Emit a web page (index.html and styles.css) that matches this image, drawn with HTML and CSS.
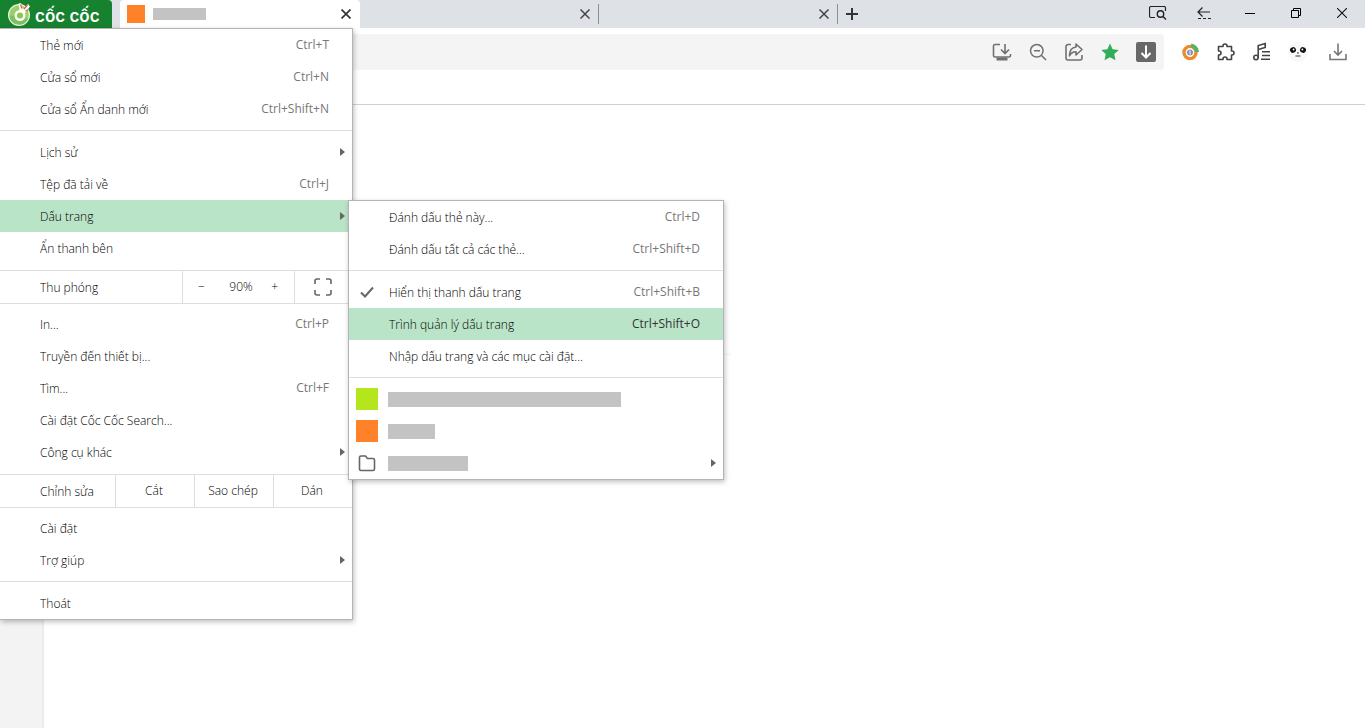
FILE: index.html
```html
<!DOCTYPE html>
<html lang="vi">
<head>
<meta charset="utf-8">
<title>Cốc Cốc</title>
<link rel="stylesheet" href="styles.css">
</head>
<body>
<div class="browser">
  <header class="tabstrip">
    <button class="brand" aria-label="Menu Cốc Cốc">
      <svg width="23" height="26" viewBox="0 0 23 26" aria-hidden="true">
        <circle cx="11" cy="14" r="11" fill="#e9f5df"/>
        <circle cx="11" cy="14" r="9.800" fill="#9bcf68"/>
        <path d="M1.500 15a9.800 9.800 0 0 0 18.500 3l-8-4z" fill="#7dc05f"/>
        <path d="M12 12L10.500 2.500l2.500-.5 2 6 5-5 2 2.500-6 8z" fill="#f4faef"/>
        <path d="M12.500 3.500l1.500 4M19.500 4l-3.500 4M20.500 8.500l-3 1.500" stroke="#e25a4c" stroke-width="1.200"/>
        <circle cx="12" cy="14.500" r="4.300" fill="#8cc651" stroke="#fff" stroke-width="2.400"/>
      </svg>
      <span class="brand-name">cốc cốc</span>
    </button>
    <div class="tab tab-active">
      <span class="favicon orange"></span><span class="mask mask-tab"></span>
      <button class="tab-close" aria-label="Đóng thẻ"><svg width="10" height="10" viewBox="0 0 10 10"><path d="M.5.5l9 9M9.5.5l-9 9" stroke="#333" stroke-width="1.7"/></svg></button>
    </div>
    <div class="tab">
      <button class="tab-close" aria-label="Đóng thẻ"><svg width="10" height="10" viewBox="0 0 10 10"><path d="M.5.5l9 9M9.5.5l-9 9" stroke="#444" stroke-width="1.5"/></svg></button>
    </div>
    <div class="tab">
      <button class="tab-close" aria-label="Đóng thẻ"><svg width="10" height="10" viewBox="0 0 10 10"><path d="M.5.5l9 9M9.5.5l-9 9" stroke="#444" stroke-width="1.5"/></svg></button>
    </div>
    <button class="new-tab" aria-label="Thẻ mới"><svg width="12" height="12" viewBox="0 0 12 12"><path d="M6 0v12M0 6h12" stroke="#333" stroke-width="2"/></svg></button>
    <div class="window-controls">
      <button aria-label="Tìm thẻ"><svg width="18" height="14" viewBox="0 0 18 14" fill="none" stroke="#222"><path d="M6 11.500H2A1.500 1.500 0 0 1 .5 10V2A1.500 1.500 0 0 1 2 .5h13A1.500 1.500 0 0 1 16.500 2v3" stroke-width="1.200"/><circle cx="11.500" cy="8" r="3.200" stroke-width="1.400"/><path d="M14 10.500l3 3" stroke-width="1.400"/></svg></button>
      <button aria-label="Khôi phục thẻ"><svg width="14" height="14" viewBox="0 0 14 14" fill="none" stroke="#222" stroke-width="1.200"><path d="M13 6H1M5.500 1.500L1 6l4.500 4.500"/><path d="M1 12.500h13" stroke-dasharray="3 2"/></svg></button>
      <button aria-label="Thu nhỏ"><svg width="10" height="10" viewBox="0 0 10 10"><path d="M0 5.500h10" stroke="#000"/></svg></button>
      <button aria-label="Khôi phục cửa sổ"><svg width="10" height="10" viewBox="0 0 10 10" fill="none" stroke="#000"><path d="M.5 2.500h7v7h-7zM2.500 2.500v-2h7v7h-2"/></svg></button>
      <button aria-label="Đóng"><svg width="10" height="10" viewBox="0 0 10 10"><path d="M0 0l10 10M10 0L0 10" stroke="#111" stroke-width="1.100"/></svg></button>
    </div>
  </header>

  <div class="toolbar">
    <div class="omnibox">
      <button aria-label="Cài đặt ứng dụng"><svg width="20" height="20" viewBox="0 0 20 20" fill="none" stroke="#707070" stroke-width="1.600"><path d="M8 2.500H3A1.500 1.500 0 0 0 1.500 4v9.500A1.500 1.500 0 0 0 3 15h14a1.500 1.500 0 0 0 1.500-1.500V12"/><path d="M4.500 17h11" stroke-width="3"/><path d="M13 2v9M9 7.500l4 4 4-4"/></svg></button>
      <button aria-label="Thu phóng"><svg width="20" height="20" viewBox="0 0 20 20" fill="none" stroke="#707070" stroke-width="1.500"><circle cx="8.800" cy="8.800" r="6.300"/><path d="M6 8.800h6M13.500 13.500l4.500 4.500"/></svg></button>
      <button aria-label="Chia sẻ"><svg width="20" height="20" viewBox="0 0 20 20" fill="none" stroke="#707070" stroke-width="1.600" stroke-linejoin="round"><path d="M7 2.500H4A2 2 0 0 0 2 4.500v11.500a2 2 0 0 0 2 2h12a2 2 0 0 0 2-2V13"/><path d="M12 2l6 5.500-6 5.500V9.800c-3 0-5 1-6.500 4C5.500 8.500 8 5.500 12 5z"/></svg></button>
      <button aria-label="Dấu trang"><svg width="20" height="20" viewBox="0 0 20 20"><path d="M10 1.500l2.600 5.700 6.200.7-4.600 4.200 1.300 6.200-5.500-3.100-5.500 3.100 1.300-6.200L1.200 7.900l6.200-.7z" fill="#2fae57"/></svg></button>
      <button aria-label="Tải xuống"><svg width="20" height="20" viewBox="0 0 20 20"><rect width="20" height="20" rx="2" fill="#686868"/><path d="M10 3.500v12M5.500 11l4.500 4.500 4.500-4.500" fill="none" stroke="#fff" stroke-width="2"/></svg></button>
    </div>
    <div class="extensions">
      <button aria-label="Tiện ích bảo vệ"><svg width="20" height="20" viewBox="0 0 20 20" fill="none"><circle cx="10" cy="10.500" r="6" stroke="#ed8c2e" stroke-width="3.500"/><path d="M11 3.500a7 7 0 0 1 6 6.500" stroke="#55b467" stroke-width="4"/><circle cx="10" cy="10.500" r="3.600" fill="#8290b4" stroke="#fff" stroke-width="1.200"/><path d="M10 8.500v4" stroke="#fff"/></svg></button>
      <button aria-label="Tiện ích"><svg width="20" height="20" viewBox="0 0 20 20" fill="none" stroke="#444" stroke-width="1.600" stroke-linejoin="round"><path d="M2.500 4.500H7V4a2 2 0 0 1 4 0v.5h4.500V9h.5a2 2 0 0 1 0 4h-.5v4.500H11V17a2 2 0 0 0-4 0v.5H2.500V13H3a2 2 0 0 0 0-4h-.5z"/></svg></button>
      <button aria-label="Danh sách nhạc"><svg width="20" height="20" viewBox="0 0 20 20" fill="none" stroke="#444" stroke-width="1.600"><circle cx="4" cy="15.500" r="2.200"/><path d="M6.200 15.500V3.500l7-2v4l-7 2M10 9.800h8M10 13.500h8M9 17.200h9"/></svg></button>
      <button aria-label="Hồ sơ"><svg width="20" height="20" viewBox="0 0 20 20"><circle cx="10" cy="10" r="10" fill="#f8f8f8"/><ellipse cx="5" cy="8" rx="3" ry="2.800" fill="#111" transform="rotate(-25 5 8)"/><ellipse cx="15" cy="8" rx="3" ry="2.800" fill="#111" transform="rotate(25 15 8)"/><circle cx="5.600" cy="7.500" r=".9" fill="#fff"/><circle cx="14.400" cy="7.500" r=".9" fill="#fff"/><path d="M9 11h2M7.500 14h5" stroke="#333"/></svg></button>
      <button aria-label="Tệp tải về"><svg width="20" height="20" viewBox="0 0 20 20" fill="none" stroke="#777" stroke-width="1.600"><path d="M2 12v5.500h16V12M10 1.500v11M6 9l4 4 4-4"/></svg></button>
    </div>
  </div>
  <div class="bookmarks-bar"></div>

  <div class="viewport">
    <aside class="sidebar"></aside>
    <main class="page"><hr class="page-rule"></main>
  </div>

  <nav class="menu main-menu" aria-label="Menu chính">
    <ul class="group">
      <li><button class="item"><span class="label">Thẻ mới</span><kbd>Ctrl+T</kbd></button></li>
      <li><button class="item"><span class="label">Cửa sổ mới</span><kbd>Ctrl+N</kbd></button></li>
      <li><button class="item"><span class="label">Cửa sổ Ẩn danh mới</span><kbd>Ctrl+Shift+N</kbd></button></li>
    </ul>
    <ul class="group">
      <li><button class="item parent"><span class="label">Lịch sử</span></button></li>
      <li><button class="item"><span class="label">Tệp đã tải về</span><kbd>Ctrl+J</kbd></button></li>
      <li class="has-submenu">
        <button class="item parent selected"><span class="label">Dấu trang</span></button>
        <div class="menu submenu">
          <ul class="group">
            <li><button class="item"><span class="label">Đánh dấu thẻ này...</span><kbd>Ctrl+D</kbd></button></li>
            <li><button class="item"><span class="label">Đánh dấu tất cả các thẻ...</span><kbd>Ctrl+Shift+D</kbd></button></li>
          </ul>
          <ul class="group">
            <li><button class="item with-icon"><svg width="22" height="22" viewBox="0 0 22 22"><path d="M5 11.500l4 4 8-9" fill="none" stroke="#666" stroke-width="2"/></svg><span class="label">Hiển thị thanh dấu trang</span><kbd>Ctrl+Shift+B</kbd></button></li>
            <li><button class="item selected"><span class="label">Trình quản lý dấu trang</span><kbd>Ctrl+Shift+O</kbd></button></li>
            <li><button class="item"><span class="label">Nhập dấu trang và các mục cài đặt...</span></button></li>
          </ul>
          <ul class="group">
            <li><button class="item with-icon" aria-label="Dấu trang 1"><span class="swatch lime"></span><span class="mask mask-long"></span></button></li>
            <li><button class="item with-icon" aria-label="Dấu trang 2"><span class="swatch orange"></span><span class="mask mask-short"></span></button></li>
            <li><button class="item with-icon parent" aria-label="Thư mục"><svg width="22" height="22" viewBox="0 0 22 22"><path d="M5 4h4.500l2 2.500H17A1.500 1.500 0 0 1 18.500 8v9a1.500 1.500 0 0 1-1.500 1.500H5A1.500 1.500 0 0 1 3.500 17V5.500A1.500 1.500 0 0 1 5 4z" fill="none" stroke="#666" stroke-width="1.600"/></svg><span class="mask mask-medium"></span></button></li>
          </ul>
        </div>
      </li>
      <li><button class="item"><span class="label">Ẩn thanh bên</span></button></li>
    </ul>
    <div class="row">
      <span class="row-label">Thu phóng</span>
      <div class="zoom-controls"><button aria-label="Thu nhỏ">−</button><output>90%</output><button aria-label="Phóng to">+</button></div>
      <button class="fullscreen" aria-label="Toàn màn hình"><svg width="18" height="18" viewBox="0 0 18 18"><path d="M1 6V3a2 2 0 0 1 2-2h3M12 1h3a2 2 0 0 1 2 2v3M17 12v3a2 2 0 0 1-2 2h-3M6 17H3a2 2 0 0 1-2-2v-3" fill="none" stroke="#666" stroke-width="1.600"/></svg></button>
    </div>
    <ul class="group">
      <li><button class="item"><span class="label">In...</span><kbd>Ctrl+P</kbd></button></li>
      <li><button class="item"><span class="label">Truyền đến thiết bị...</span></button></li>
      <li><button class="item"><span class="label">Tìm...</span><kbd>Ctrl+F</kbd></button></li>
      <li><button class="item"><span class="label">Cài đặt Cốc Cốc Search...</span></button></li>
      <li><button class="item parent"><span class="label">Công cụ khác</span></button></li>
    </ul>
    <div class="row">
      <span class="row-label">Chỉnh sửa</span>
      <button class="edit">Cắt</button><button class="edit">Sao chép</button><button class="edit">Dán</button>
    </div>
    <ul class="group">
      <li><button class="item"><span class="label">Cài đặt</span></button></li>
      <li><button class="item parent"><span class="label">Trợ giúp</span></button></li>
    </ul>
    <ul class="group">
      <li><button class="item"><span class="label">Thoát</span></button></li>
    </ul>
  </nav>
</div>
</body>
</html>
```
FILE: styles.css
```css
* { box-sizing: border-box; }
body {
  margin: 0;
  font: 12px/16px "Open Sans", "Noto Sans", sans-serif;
  color: #000;
  background: #fff;
}
button {
  padding: 0;
  border: 0;
  background: none;
  font: inherit;
  color: inherit;
}
svg { display: block; flex: none; }
ul { list-style: none; margin: 0; padding: 0; }

.browser {
  position: relative;
  display: flex;
  flex-direction: column;
  min-height: 100vh;
}

.tabstrip {
  display: flex;
  height: 28px;
  background: #dee1e6;
}
.brand {
  display: flex;
  align-items: center;
  gap: 4px;
  width: 112px;
  margin-right: 8px;
  padding-left: 8px;
  border-radius: 0 4px 0 0;
  background: #168230;
  color: #fff;
}
.brand-name {
  padding-top: 4px;
  font: 600 17px/24px Inter, sans-serif;
  white-space: nowrap;
}
.tab {
  display: flex;
  align-items: center;
  flex: 0 1 239px;
  margin: 4px 0;
  padding: 0 8px;
  border-right: 1px solid #8b8e92;
}
.tab-active {
  flex-basis: 240px;
  gap: 8px;
  margin: 0;
  padding: 0 9px 0 7px;
  border: 0;
  border-radius: 4px 4px 0 0;
  background: #fff;
}
.tab-close { margin-left: auto; }
.favicon { width: 18px; height: 18px; }
.mask { height: 15px; background: #c3c3c3; }
.mask-tab { width: 53px; height: 12px; }
.orange { background: #ff8228; }
.lime { background: #b5e61d; }
.new-tab {
  display: grid;
  place-items: center;
  width: 28px;
}
.window-controls { display: flex; margin-left: auto; }
.window-controls button {
  display: grid;
  place-items: center;
  width: 46px;
  padding-bottom: 2px;
}

.toolbar {
  display: flex;
  align-items: center;
  height: 48px;
  padding: 0 17px 0 112px;
}
.omnibox {
  display: flex;
  justify-content: flex-end;
  align-items: center;
  flex: 1;
  gap: 16px;
  height: 36px;
  padding-right: 8px;
  border-radius: 4px;
  background: #f4f4f4;
}
.extensions { display: flex; gap: 16px; padding-left: 16px; }
.extensions button:last-child { margin-left: 4px; }
.bookmarks-bar { height: 29px; border-bottom: 1px solid #d0d0d0; }

.viewport { display: flex; flex: 1; }
.sidebar {
  width: 44px;
  border-right: 2px solid #ececec;
  background: #f3f3f3;
}
.page { flex: 1; padding-top: 249px; }
.page-rule {
  width: 52%;
  margin: 0;
  border: 0;
  border-top: 1px solid #f4f4f4;
}

.menu {
  position: absolute;
  border: 1px solid #b4b4b4;
  background: #fff;
  box-shadow: 1px 2px 5px rgba(0, 0, 0, 0.25);
}
.main-menu {
  top: 28px;
  left: 0;
  width: 353px;
  border-left: 0;
}
.has-submenu { position: relative; }
.submenu {
  top: 0;
  left: 348px;
  z-index: 1;
  width: 376px;
}
.group { padding: 5px 0; }
.group:first-child { padding-top: 0; }
.group:last-child { padding-bottom: 0; }
.group + .group { border-top: 1px solid #dcdfdd; }
.group:has(+ .row) { padding-bottom: 6px; }
.row + .group { padding-top: 4px; }
.item {
  display: flex;
  align-items: center;
  width: 100%;
  height: 32px;
  padding: 0 23px 0 40px;
  text-align: left;
  white-space: nowrap;
}
.label {
  padding-top: 2px;
  font-weight: 300;
}
.item kbd {
  margin-left: auto;
  font: inherit;
  color: #777;
}
.selected { background: #bae4c7; }
.item.selected kbd { color: #333; }
.parent { padding-right: 7px; }
.parent::after {
  content: "";
  margin-left: auto;
  border: 4px solid transparent;
  border-left: 5px solid #666;
  border-right: 0;
}
.with-icon { gap: 10px; padding-left: 7px; }
.with-icon .label { padding-left: 1px; }
.swatch { width: 22px; height: 22px; }
.mask-long { width: 233px; }
.mask-short { width: 47px; }
.mask-medium { width: 80px; }

.row {
  display: flex;
  height: 34px;
  border: solid #dcdfdd;
  border-width: 1px 0;
  font-weight: 300;
}
.row-label {
  flex: 1;
  padding: 1px 0 0 40px;
  line-height: 32px;
}
.zoom-controls {
  display: flex;
  align-items: center;
  justify-content: space-between;
  width: 112px;
  padding: 0 16px 0 15px;
  border-left: 1px solid #dcdfdd;
}
.zoom-controls output { padding-left: 6px; }
.fullscreen {
  display: grid;
  place-items: center;
  width: 58px;
  padding-right: 2px;
  border-left: 1px solid #dcdfdd;
}
.edit {
  width: 79px;
  padding-right: 2px;
  border-left: 1px solid #dcdfdd;
}
```
